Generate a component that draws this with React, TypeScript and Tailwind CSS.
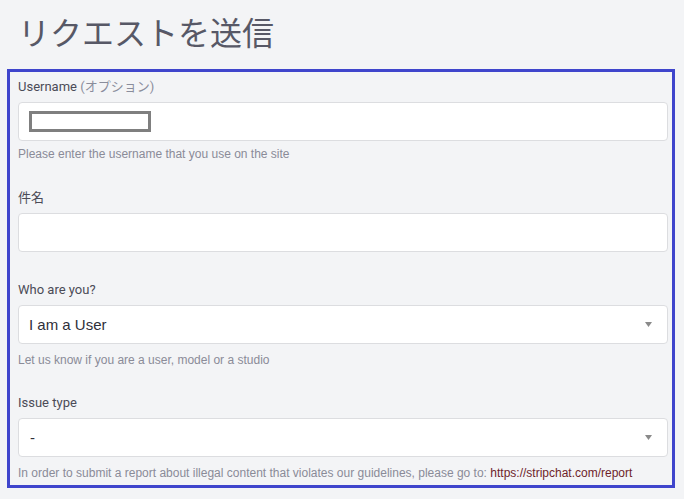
import React from 'react';

const labelCls = "block text-[13px] leading-[18px] text-[#4b4b57] mb-[6px]";
const helpCls = "text-[12px] leading-[16px] text-[#8a8b98]";
const fieldCls = "w-full h-[39px] bg-white border border-[#dcdde0] rounded-[4px] flex items-center pl-[10px] pr-[15px]";

const Arrow = () => (
  <svg width="7" height="5" viewBox="0 0 7 5" className="ml-auto">
    <path d="M0 0 L7 0 L3.5 5 Z" fill="#8a8a8a" />
  </svg>
);

export default function App() {
  return (
    <div className="w-[684px] h-[499px] bg-[#f3f4f6] overflow-hidden" style={{ fontFamily: '"Liberation Sans", Arial, sans-serif' }}>
      {/* Title */}
      <div className="pt-[11px] pl-[18px] mb-[18px]">
        <h1 className="text-[32px] leading-[40px] text-[#575866] font-normal" style={{ fontFamily: '"Noto Sans CJK JP", sans-serif' }}>
          リクエストを送信
        </h1>
      </div>

      {/* Form box */}
      <div className="ml-[7px] w-[668px] border-[3px] border-[#3f45cc] pl-[8px] pr-[4px] pt-[6px] pb-[4px]">
        <div>
          <label className={labelCls} style={{ fontFamily: 'Roboto, "Noto Sans CJK JP", sans-serif' }}>
            Username <span className="text-[#8a8d9c]">(オプション)</span>
          </label>
          <div className={`${fieldCls} h-[38px]`}>
            <div className="w-[122px] h-[21px] border-[3px] border-[#7f7f7f] bg-white" />
          </div>
          <p className={`${helpCls} mt-[5px]`}>Please enter the username that you use on the site</p>
        </div>

        <div className="mt-[27px]">
          <label className={labelCls} style={{ fontFamily: 'Roboto, "Noto Sans CJK JP", sans-serif' }}>件名</label>
          <div className={`${fieldCls} h-[38px]`} />
        </div>

        <div className="mt-[29px]">
          <label className={labelCls} style={{ fontFamily: 'Roboto, "Noto Sans CJK JP", sans-serif' }}>Who are you?</label>
          <div className={fieldCls}>
            <span className="text-[15px] text-[#2f2f3a] relative top-[1px]">I am a User</span>
            <Arrow />
          </div>
          <p className={`${helpCls} mt-[8px]`}>Let us know if you are a user, model or a studio</p>
        </div>

        <div className="mt-[26px]">
          <label className={labelCls} style={{ fontFamily: 'Roboto, "Noto Sans CJK JP", sans-serif' }}>Issue type</label>
          <div className={fieldCls}>
            <span className="text-[15px] text-[#2f2f3a] pl-[1px] relative top-[1px]">-</span>
            <Arrow />
          </div>
          <p className={`${helpCls} mt-[8px]`}>
            In order to submit a report about illegal content that violates our guidelines, please go to:{' '}
            <a className="text-[#6e1f2b]">https://stripchat.com/report</a>
          </p>
        </div>
      </div>
    </div>
  );
}
